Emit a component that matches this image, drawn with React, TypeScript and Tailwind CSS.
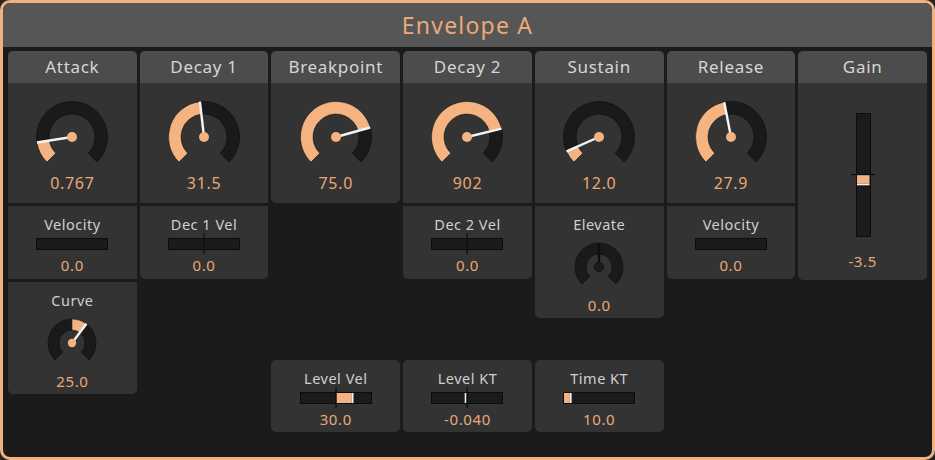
import React from "react";

const ORANGE = "#f4b381";
const FONT = { fontFamily: '"Noto Sans", "Open Sans", sans-serif' };

const pt = (c: number, r: number, a: number) => {
  const rad = (a * Math.PI) / 180;
  return [c + r * Math.sin(rad), c - r * Math.cos(rad)];
};

// annular sector, angles clockwise from 12 o'clock
const sector = (c: number, ro: number, ri: number, a0: number, a1: number) => {
  const large = a1 - a0 > 180 ? 1 : 0;
  const [x0, y0] = pt(c, ro, a0);
  const [x1, y1] = pt(c, ro, a1);
  const [x2, y2] = pt(c, ri, a1);
  const [x3, y3] = pt(c, ri, a0);
  return `M${x0} ${y0} A${ro} ${ro} 0 ${large} 1 ${x1} ${y1} L${x2} ${y2} A${ri} ${ri} 0 ${large} 0 ${x3} ${y3} Z`;
};

type KnobProps = {
  size: number;
  ro: number;
  ri: number;
  dot: number;
  angle: number;
  from?: number;
  dim?: boolean;
};

const Knob = ({ size, ro, ri, dot, angle, from = -135, dim = false }: KnobProps) => {
  const c = size / 2;
  const [px, py] = pt(c, ro, angle);
  const a0 = Math.min(from, angle);
  const a1 = Math.max(from, angle);
  return (
    <svg width={size} height={size} className="block mx-auto">
      <path d={sector(c, ro, ri, -135, 135)} fill="#1a1a1a" stroke="#111" strokeWidth="0.8" />
      {!dim && a1 - a0 > 0.5 && (
        <path d={sector(c, ro, ri, a0, a1)} fill={ORANGE} stroke="#2a2a2a" strokeWidth="0.6" />
      )}
      <line
        x1={c}
        y1={c}
        x2={px}
        y2={py}
        stroke={dim ? "#0e0e0e" : "#f4f4f4"}
        strokeWidth="2.4"
      />
      <circle cx={c} cy={c} r={dot} fill={dim ? "#1c1c1c" : ORANGE} stroke={dim ? "#101010" : "none"} />
    </svg>
  );
};

type HSliderProps = {
  center?: boolean;
  fill?: [number, number];
  thumb?: number;
};

const HSlider = ({ center, fill, thumb }: HSliderProps) => (
  <svg width={72} height={21} className="block mx-auto">
    <rect x={0.5} y={5.5} width={71} height={11} fill="#1b1b1b" stroke="#0c0c0c" />
    {fill && <rect x={fill[0]} y={6} width={fill[1] - fill[0]} height={10} fill={ORANGE} />}
    {thumb !== undefined && <rect x={thumb} y={6} width={1.8} height={10} fill="#f2f2f2" />}
    {center && <rect x={35.5} y={0} width={1.2} height={21} fill="#0c0c0c" />}
  </svg>
);

const GainSlider = () => (
  <svg width={24} height={124} className="block mx-auto">
    <rect x={5.5} y={0.5} width={14} height={123} fill="#1b1b1b" stroke="#0c0c0c" />
    <rect x={6} y={62} width={12.5} height={8.7} fill={ORANGE} />
    <rect x={6} y={70.7} width={12.5} height={1.6} fill="#f2f2f2" />
    <rect x={0} y={61} width={24} height={1.2} fill="#0c0c0c" />
  </svg>
);

const Value = ({ children }: { children: React.ReactNode }) => (
  <div className="text-center text-[15px] leading-[20px] tracking-[0.6px] text-[#e9a877]">{children}</div>
);

const Label = ({ children }: { children: React.ReactNode }) => (
  <div className="text-center text-[14.5px] leading-[20px] tracking-[0.5px] text-[#cfcfcf]">{children}</div>
);

type KnobCardProps = {
  title: string;
  value: string;
  angle: number;
  rounded: string;
};

const KnobCard = ({ title, value, angle, rounded }: KnobCardProps) => (
  <div className={`h-[152px] bg-[#333333] overflow-hidden ${rounded}`}>
    <div className="h-[32px] bg-[#4c4c4c] flex items-center justify-center text-[17px] tracking-[0.7px] text-[#d6d6d6]">
      {title}
    </div>
    <div className="pt-[17px]">
      <Knob size={74} ro={35.5} ri={23} dot={5} angle={angle} />
      <div className="text-center text-[16px] leading-[18px] tracking-[0.7px] text-[#e9a877]">{value}</div>
    </div>
  </div>
);

const SliderCard = ({
  label,
  value,
  rounded,
  h = "h-[73px]",
  ...slider
}: HSliderProps & { label: string; value: string; rounded: string; h?: string }) => (
  <div className={`${h} bg-[#333333] pt-[8px] ${rounded}`}>
    <Label>{label}</Label>
    <div className="-mt-[1px]">
      <HSlider {...slider} />
    </div>
    <div className="mt-[1px]">
      <Value>{value}</Value>
    </div>
  </div>
);

const SmallKnobCard = ({
  label,
  value,
  angle,
  from,
  dim,
  rounded,
}: {
  label: string;
  value: string;
  angle: number;
  from?: number;
  dim?: boolean;
  rounded: string;
}) => (
  <div className={`h-[112px] bg-[#333333] pt-[8px] ${rounded}`}>
    <Label>{label}</Label>
    <div className="mt-[8px]">
      <Knob size={50} ro={24} ri={13} dot={dim ? 4.5 : 4.2} angle={angle} from={from} dim={dim} />
    </div>
    <div className="mt-[3px]">
      <Value>{value}</Value>
    </div>
  </div>
);

export default function App() {
  return (
    <div className="w-[935px] h-[460px] bg-[#262626]" style={FONT}>
      <div className="w-full h-full rounded-[10px] border-[3px] border-[#f2b17f] bg-[#1b1b1b] overflow-hidden flex flex-col">
        <div className="h-[44px] shrink-0 bg-[#565656] flex items-center justify-center text-[23px] tracking-[1.2px] text-[#eba979]">
          Envelope A
        </div>
        <div className="flex-1 grid grid-cols-7 gap-x-[3px] px-[5px] pt-[4px] pb-[25px]">
          {/* Attack */}
          <div className="flex flex-col gap-[3px]">
            <KnobCard title="Attack" value="0.767" angle={-99} rounded="rounded-t-[5px]" />
            <SliderCard label="Velocity" value="0.0" rounded="" />
            <SmallKnobCard label="Curve" value="25.0" angle={37} from={0} rounded="rounded-b-[5px]" />
          </div>
          {/* Decay 1 */}
          <div className="flex flex-col gap-[3px]">
            <KnobCard title="Decay 1" value="31.5" angle={-6.6} rounded="rounded-t-[5px]" />
            <SliderCard label="Dec 1 Vel" value="0.0" center rounded="rounded-b-[5px]" />
          </div>
          {/* Breakpoint */}
          <div className="flex flex-col gap-[3px]">
            <KnobCard title="Breakpoint" value="75.0" angle={74.5} rounded="rounded-[5px]" />
            <div className="mt-auto">
              <SliderCard
                label="Level Vel"
                value="30.0"
                center
                fill={[36, 51.7]}
                thumb={51.7}
                h="h-[72px]"
                rounded="rounded-[5px]"
              />
            </div>
          </div>
          {/* Decay 2 */}
          <div className="flex flex-col gap-[3px]">
            <KnobCard title="Decay 2" value="902" angle={76.3} rounded="rounded-t-[5px]" />
            <SliderCard label="Dec 2 Vel" value="0.0" center rounded="rounded-b-[5px]" />
            <div className="mt-auto">
              <SliderCard label="Level KT" value="-0.040" center thumb={33.7} h="h-[72px]" rounded="rounded-[5px]" />
            </div>
          </div>
          {/* Sustain */}
          <div className="flex flex-col gap-[3px]">
            <KnobCard title="Sustain" value="12.0" angle={-114} rounded="rounded-t-[5px]" />
            <SmallKnobCard label="Elevate" value="0.0" angle={0} from={0} dim rounded="rounded-b-[5px]" />
            <div className="mt-auto">
              <SliderCard label="Time KT" value="10.0" fill={[1, 6.8]} thumb={6.8} h="h-[72px]" rounded="rounded-[5px]" />
            </div>
          </div>
          {/* Release */}
          <div className="flex flex-col gap-[3px]">
            <KnobCard title="Release" value="27.9" angle={-11} rounded="rounded-t-[5px]" />
            <SliderCard label="Velocity" value="0.0" rounded="rounded-b-[5px]" />
          </div>
          {/* Gain */}
          <div className="flex flex-col">
            <div className="h-[229px] bg-[#333333] rounded-[5px] overflow-hidden">
              <div className="h-[32px] bg-[#4c4c4c] flex items-center justify-center text-[17px] tracking-[0.7px] text-[#d6d6d6]">
                Gain
              </div>
              <div className="pt-[30px]">
                <GainSlider />
                <div className="mt-[14px]">
                  <Value>-3.5</Value>
                </div>
              </div>
            </div>
          </div>
        </div>
      </div>
    </div>
  );
}
